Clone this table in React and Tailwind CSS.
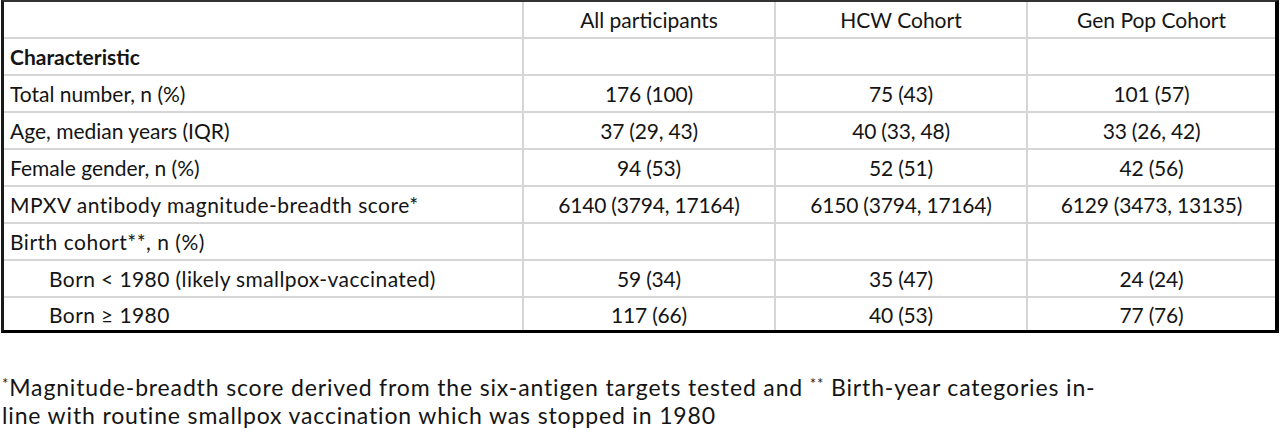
const rows = [
  { label: 'Total number, n (%)', values: ['176 (100)', '75 (43)', '101 (57)'] },
  { label: 'Age, median years (IQR)', values: ['37 (29, 43)', '40 (33, 48)', '33 (26, 42)'] },
  { label: 'Female gender, n (%)', values: ['94 (53)', '52 (51)', '42 (56)'] },
  { label: 'MPXV antibody magnitude-breadth score*', values: ['6140 (3794, 17164)', '6150 (3794, 17164)', '6129 (3473, 13135)'], wide: true },
  { label: 'Birth cohort**, n (%)', values: ['', '', ''], wide: true },
  { label: 'Born < 1980 (likely smallpox-vaccinated)', values: ['59 (34)', '35 (47)', '24 (24)'], indent: true },
  { label: 'Born \u2265 1980', values: ['117 (66)', '40 (53)', '77 (76)'], indent: true },
]

function Cell({ children, className = '' }) {
  return <div className={`flex items-center bg-white ${className}`}>{children}</div>
}

export default function App() {
  return (
    <div className="h-[433px] w-[1280px] bg-white text-[#141414]" style={{ fontFamily: 'Lato, "Open Sans", sans-serif' }}>
      <div className="ml-px w-[1278px] border-l-[3px] border-t-2 border-r-4 border-b-[3px] border-l-[#1a1a1a] border-t-[#333] border-r-black border-b-black">
        <div className="grid grid-cols-[518px_250px_250px_247px] grid-rows-[35px_35px_35px_35px_35px_35px_35px_35px_32px] gap-[2px] bg-[#d6d6d6] text-[21px] leading-none">
          <Cell />
          <Cell className="justify-center">All participants</Cell>
          <Cell className="justify-center">HCW Cohort</Cell>
          <Cell className="justify-center">Gen Pop Cohort</Cell>

          <Cell className="pl-[6px] font-bold">Characteristic</Cell>
          <Cell />
          <Cell />
          <Cell />

          {rows.map((row) => (
            <div key={row.label} className="contents">
              <Cell className={row.indent ? 'pl-[45px] tracking-[0.4px]' : row.wide ? 'pl-[6px] tracking-[0.5px]' : 'pl-[6px]'}>{row.label}</Cell>
              {row.values.map((value, i) => (
                <Cell key={i} className="justify-center tracking-[-0.2px]">{value}</Cell>
              ))}
            </div>
          ))}
        </div>
      </div>

      <div className="mt-[40px] pl-[2px] text-[23px] leading-[28px] tracking-[0.85px]">
        <p>
          <sup className="text-[15px]">*</sup>Magnitude-breadth score derived from the six-antigen targets tested and{' '}
          <sup className="text-[15px]">**</sup> Birth-year categories in-
        </p>
        <p>line with routine smallpox vaccination which was stopped in 1980</p>
      </div>
    </div>
  )
}
